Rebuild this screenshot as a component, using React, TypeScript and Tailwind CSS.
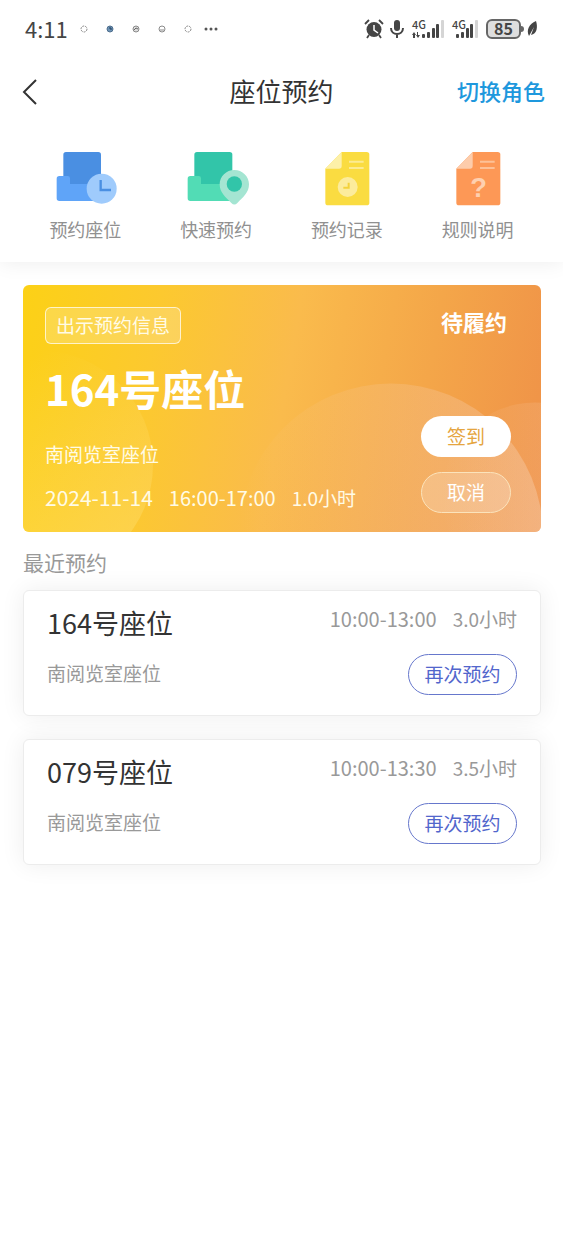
import React from 'react';

const QUICK_LINKS = [
  { label: '预约座位', icon: <SeatClockIcon /> },
  { label: '快速预约', icon: <SeatPinIcon /> },
  { label: '预约记录', icon: <RecordIcon /> },
  { label: '规则说明', icon: <RulesIcon /> },
];

const RECENT = [
  { seat: '164号座位', room: '南阅览室座位', time: '10:00-13:00', hours: '3.0小时' },
  { seat: '079号座位', room: '南阅览室座位', time: '10:00-13:30', hours: '3.5小时' },
];

function SeatClockIcon() {
  return (
    <svg viewBox="0 0 192 162" className="w-16 h-[54px]">
      <rect x="31" y="0" width="113" height="110" rx="8" fill="#4a8fe2" />
      <path d="M19 72h25q7 0 7 7v17h93v51H19q-8 0-8-8V80q0-8 8-8z" fill="#5fa4f8" />
      <circle cx="146" cy="110" r="45" fill="#9fcbfc" />
      <path d="M143 84v30h31" fill="none" stroke="#4a8fe2" strokeWidth="7" />
    </svg>
  );
}

function SeatPinIcon() {
  return (
    <svg viewBox="0 0 192 162" className="w-16 h-[54px] overflow-visible">
      <rect x="31" y="0" width="114" height="110" rx="8" fill="#32c5a9" />
      <path d="M19 72h25q7 0 7 7v17h93v51H19q-8 0-8-8V80q0-8 8-8z" fill="#52dcb5" />
      <path d="M151 54c24 0 44 19 44 43 0 25-18 39-35 56q-9 9-18 0c-17-17-35-31-35-56 0-24 20-43 44-43z" fill="#a4e5d2" />
      <circle cx="151" cy="96" r="23" fill="#32c5a9" />
    </svg>
  );
}

function RecordIcon() {
  return (
    <svg viewBox="0 0 192 162" className="w-16 h-[54px]">
      <path d="M80 0h75q8 0 8 8v144q0 8-8 8H39q-8 0-8-8V50z" fill="#fadc41" />
      <path d="M80 0v42q0 8-8 8H31z" fill="#fdf0a8" />
      <path d="M102 29h44M102 48h44" stroke="#fceb92" strokeWidth="6" />
      <circle cx="98" cy="105" r="30" fill="#fcec9c" />
      <path d="M101 92v15H85" fill="none" stroke="#f3d23c" strokeWidth="6" />
    </svg>
  );
}

function RulesIcon() {
  return (
    <svg viewBox="0 0 192 162" className="w-16 h-[54px]">
      <path d="M80 0h75q8 0 8 8v144q0 8-8 8H39q-8 0-8-8V50z" fill="#fd9856" />
      <path d="M80 0v42q0 8-8 8H31z" fill="#fdccab" />
      <path d="M102 29h44M102 48h44" stroke="#fdc197" strokeWidth="6" />
      <text x="98" y="134" textAnchor="middle" fontSize="82" fontWeight="700" fontFamily="Liberation Sans, sans-serif" fill="#fed0b0">?</text>
    </svg>
  );
}

function Signal({ data }: { data?: boolean }) {
  return (
    <div className="relative h-5">
      {data ? (
        <svg viewBox="0 0 32 20" className="w-8 h-5" fill="#454545">
          <path d="M0 16l2-3 2 3H3v3H1v-3zM4 16h1v-3h1v3h2l-2 3z" />
          <rect x="10" y="15" width="3" height="4" rx="1" />
          <rect x="15" y="13" width="3" height="6" rx="1" />
          <rect x="20" y="9" width="3" height="10" rx="1" />
          <rect x="24" y="5" width="3" height="14" rx="1" />
          <rect x="29" y="1" width="3" height="18" rx="1" fill="#d5d5d5" />
        </svg>
      ) : (
        <svg viewBox="0 0 26 20" className="w-[26px] h-5" fill="#454545">
          <rect x="4" y="15" width="3" height="4" rx="1" />
          <rect x="9" y="13" width="3" height="6" rx="1" />
          <rect x="14" y="9" width="3" height="10" rx="1" />
          <rect x="18" y="5" width="3" height="14" rx="1" />
          <rect x="23" y="1" width="3" height="18" rx="1" fill="#d5d5d5" />
        </svg>
      )}
      <span className="absolute left-0 top-0 text-[11px] leading-[10px] font-medium">4G</span>
    </div>
  );
}

function StatusBar() {
  return (
    <div className="flex items-center justify-between h-[58px] px-[25px] text-[#454545]">
      <div className="flex items-center gap-3">
        <span className="pb-0.5 text-[22px] leading-6">4:11</span>
        <svg viewBox="0 0 138 10" className="w-[138px] h-[10px]" fill="none" stroke="#8a8a8a">
          <circle cx="4" cy="5" r="3" strokeDasharray="2 1" />
          <circle cx="30" cy="5" r="3" fill="#6d93b5" stroke="#4f6f8e" />
          <path d="M30 3v2h2" stroke="#1f3d5c" />
          <circle cx="56" cy="5" r="3" fill="#ddd" />
          <path d="M54 6l2-2 2 1" stroke="#666" />
          <circle cx="82" cy="5" r="3" />
          <path d="M80 6h4" />
          <circle cx="108" cy="5" r="3" strokeDasharray="2 1" />
          <g fill="#555" stroke="none">
            <circle cx="126" cy="5" r="1.5" />
            <circle cx="131" cy="5" r="1.5" />
            <circle cx="136" cy="5" r="1.5" />
          </g>
        </svg>
      </div>
      <div className="flex items-center gap-2">
        <div className="flex items-center gap-1.5">
          {/* Alarm */}
          <svg viewBox="0 0 20 20" className="w-5 h-5" fill="none" stroke="#454545">
            <circle cx="10" cy="10.5" r="7.5" fill="#454545" stroke="none" />
            <path d="M1 5l4-4M19 5l-4-4M5 16l-2 3M15 16l2 3" strokeWidth="1.8" />
            <path d="M10 6v5l4 3" stroke="#fff" strokeWidth="1.5" />
          </svg>
          {/* Mic */}
          <svg viewBox="0 0 14 20" className="w-[14px] h-5" fill="none" stroke="#454545" strokeWidth="2">
            <rect x="4" y="1" width="6" height="11" rx="3" fill="#454545" stroke="none" />
            <path d="M1 9c0 8 12 8 12 0M7 15v4" />
          </svg>
        </div>
        <Signal data />
        <Signal />
        <div className="flex items-center">
          <span className="flex items-center justify-center w-[35px] h-5 pb-0.5 rounded-md border-2 border-[#666] bg-[#dedede] text-base leading-4 font-bold">85</span>
          <span className="w-[3px] h-1.5 rounded-r-sm bg-[#666]" />
          <svg viewBox="0 0 12 16" className="w-3 h-4 ml-0.5" fill="#454545">
            <path d="M10 0c2 6 1 13-5 14l3-8-5 9C0 9 3 3 10 0z" />
          </svg>
        </div>
      </div>
    </div>
  );
}

function CurrentBooking() {
  return (
    <section className="relative overflow-hidden rounded-md bg-[linear-gradient(100deg,#fcd116_0%,#fcc92f_25%,#fabb4c_50%,#f4a649_75%,#ef9148_100%)] text-white">
      <svg
        viewBox="0 0 518 248"
        preserveAspectRatio="xMidYMid slice"
        className="absolute inset-0 w-full h-full"
      >
        <defs>
          <linearGradient id="glow-left" x1="0.3" y1="0.1" x2="0.7" y2="1">
            <stop offset="0" stopColor="#ffe070" stopOpacity="0" />
            <stop offset="1" stopColor="#ffe070" stopOpacity="0.45" />
          </linearGradient>
          <linearGradient id="glow-center">
            <stop offset="0" stopColor="#f6d0b0" stopOpacity="0" />
            <stop offset="1" stopColor="#f6d0b0" stopOpacity="0.42" />
          </linearGradient>
          <linearGradient id="glow-right">
            <stop offset="0" stopColor="#f8d0b0" stopOpacity="0" />
            <stop offset="1" stopColor="#f8d0b0" stopOpacity="0.34" />
          </linearGradient>
        </defs>
        <circle cx="16" cy="180" r="114" fill="url(#glow-left)" />
        <circle cx="368" cy="251" r="152" fill="url(#glow-center)" />
        <circle cx="512" cy="211" r="93" fill="url(#glow-right)" />
      </svg>
      <div className="relative flex justify-between pt-[22px] pb-[19px] pl-[22px] pr-[30px]">
        <div className="flex flex-col items-start">
          <button className="h-[37px] px-2.5 pb-0.5 rounded-md border border-white/70 bg-white/20 text-[19px] leading-8 text-[#fffbe6]">
            出示预约信息
          </button>
          <h2 className="mt-3.5 text-[42px] leading-[60px] font-bold">164号座位</h2>
          <p className="mt-[22px] text-[19px] leading-7 text-[#fffbe6]">南阅览室座位</p>
          <p className="mt-3.5 flex items-baseline gap-4 text-[20px] leading-[30px] whitespace-nowrap text-[#fffbe6]">
            <span className="text-[21px]">2024-11-14</span>
            <span>16:00-17:00</span>
            <span className="text-[19px]">1.0小时</span>
          </p>
        </div>
        <div className="flex flex-col items-end">
          <span className="mr-1 text-[22px] leading-7 font-bold">待履约</span>
          <button className="mt-auto w-[90px] h-[41px] pb-0.5 rounded-full bg-white text-[19px] leading-8 text-[#e5a540]">
            签到
          </button>
          <button className="mt-[15px] w-[90px] h-[41px] pb-0.5 rounded-full border border-[#fbe3bb] bg-white/20 text-[19px] leading-8">
            取消
          </button>
        </div>
      </div>
    </section>
  );
}

const App: React.FC = () => {
  return (
    <div className="min-h-screen bg-white font-['Noto_Sans_CJK_SC',sans-serif]">
      <div className="shadow-[0_0_20px_rgba(0,0,0,0.08)]">
        <StatusBar />
        <header className="grid grid-cols-[1fr_auto_1fr] items-center h-[66px] px-[18px]">
          <button aria-label="返回" className="justify-self-start">
            <svg viewBox="0 0 24 28" className="w-6 h-7" fill="none" stroke="#333" strokeWidth="2">
              <path d="M18 3L6 15l12 12" />
            </svg>
          </button>
          <h1 className="text-[26px] leading-9 text-[#333]">座位预约</h1>
          <a href="#role" className="justify-self-end pb-0.5 text-[22px] leading-8 font-medium text-[#1e98dd]">
            切换角色
          </a>
        </header>
        <nav className="grid grid-cols-4 px-5 pt-7 pb-5">
          {QUICK_LINKS.map((item) => (
            <a key={item.label} href="#" className="flex flex-col items-center gap-2.5">
              {item.icon}
              <span className="text-[18px] leading-[26px] text-[#909090]">{item.label}</span>
            </a>
          ))}
        </nav>
      </div>

      <main className="pl-[23px] pr-[22px] pt-[23px]">
        <CurrentBooking />
        <h2 className="mt-3.5 mb-3 text-[21px] leading-8 text-[#999]">最近预约</h2>
        <div className="space-y-[23px]">
          {RECENT.map((item) => (
            <article
              key={item.seat}
              className="flex justify-between h-[126px] px-[23px] pt-3.5 pb-5 rounded-md border border-[#ececec] bg-white shadow-[0_0_24px_rgba(0,0,0,0.07)]"
            >
              <div>
                <h3 className="text-[27px] leading-9 text-[#333]">{item.seat}</h3>
                <p className="mt-[18px] text-[19px] leading-7 text-[#999]">{item.room}</p>
              </div>
              <div className="flex flex-col items-end justify-between">
                <p className="flex items-baseline gap-4 text-[20px] leading-7 whitespace-nowrap text-[#999]">
                  <span>{item.time}</span>
                  <span className="text-[19px]">{item.hours}</span>
                </p>
                <button className="w-[109px] h-[41px] pb-0.5 rounded-full border border-[#6677cc] text-[19px] leading-8 text-[#5266cc]">
                  再次预约
                </button>
              </div>
            </article>
          ))}
        </div>
      </main>
    </div>
  );
};

export default App;
